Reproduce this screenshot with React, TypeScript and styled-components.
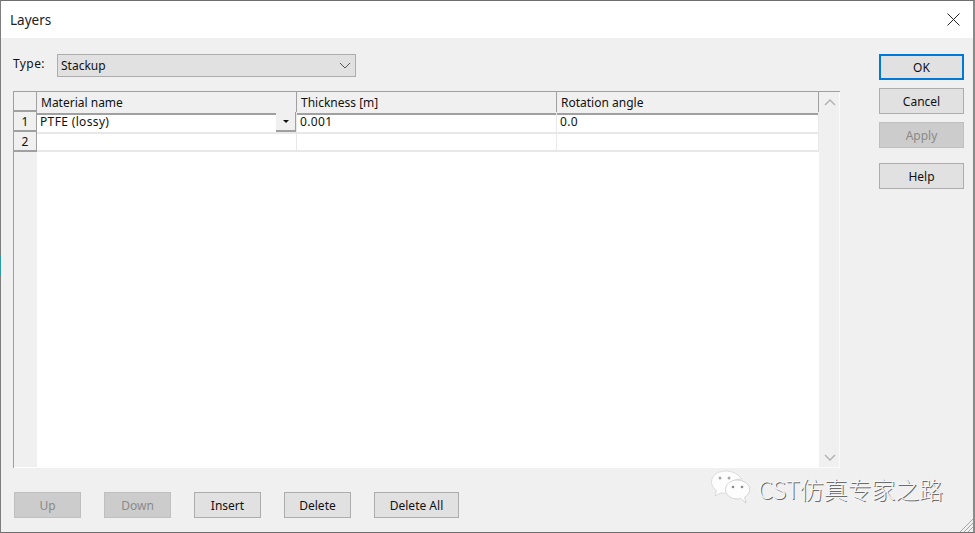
import React from "react";
import styled, { createGlobalStyle } from "styled-components";

const Global = createGlobalStyle`
  html, body { margin: 0; padding: 0; background: #f0f0f0; }
  * { box-sizing: border-box; }
  body { font-family: "Noto Sans", "Noto Sans CJK SC", sans-serif; font-size: 12px; color: #111; }
`;

const Win = styled.div`
  position: relative;
  width: 975px;
  height: 533px;
  display: flex;
  flex-direction: column;
  background: #f0f0f0;
  border-top: 1px solid #6f6f6f;
  border-left: 1px solid #7d7d7d;
  border-right: 2px solid #8a8a8a;
  border-bottom: 1px solid #6f6f6f;
  overflow: hidden;
`;

const BackdropSliver = styled.div`
  position: fixed;
  left: 0;
  top: 255px;
  width: 1px;
  height: 20px;
  background: #2a9aa5;
`;

const TitleBar = styled.div`
  height: 37px;
  flex: none;
  background: #fff;
  display: flex;
  align-items: center;
  justify-content: space-between;
  padding: 0 13px 0 9px;
  font-size: 13.5px;
  color: #222;
`;

const Body = styled.div`
  flex: 1;
  display: flex;
  min-height: 0;
  padding: 16px 9px 14px 12px;
`;

const Main = styled.div`
  width: 828px;
  display: flex;
  flex-direction: column;
`;

const TypeRow = styled.div`
  display: flex;
  align-items: center;
  height: 23px;
  gap: 12px;
`;

const TypeLabel = styled.span`
  width: 32px;
  margin-top: -4px;
  letter-spacing: 0.4px;
`;

const Combo = styled.div`
  width: 299px;
  height: 23px;
  background: #e1e1e1;
  border: 1px solid #adadad;
  display: flex;
  align-items: center;
  justify-content: space-between;
  padding: 0 2px 0 3px;
  svg { margin-right: 2px; }
`;

const Grid = styled.div`
  margin-top: 14px;
  height: 377px;
  display: grid;
  grid-template-columns: 23px 1fr 21px;
  background: #fff;
  border-top: 1px solid #a0a0a0;
  border-left: 1px solid #a0a0a0;
`;

const Gutter = styled.div`
  background: #f0f0f0;
  margin-bottom: 1px;
`;

const Table = styled.div`
  display: flex;
  flex-direction: column;
  background: #fff;
`;

const Row = styled.div`
  display: grid;
  grid-template-columns: 260px 260px 262px;
  height: 20px;
  flex: none;
`;

const HeadRow = styled(Row)`
  background: #f0f0f0;
`;

const Head = styled.div`
  padding: 0 0 0 4px;
  line-height: 21px;
  background: #f0f0f0;
  border-right: 1px solid #a0a0a0;
  border-bottom: 2px solid #a0a0a0;
  white-space: nowrap;
`;

const Corner = styled.div`
  height: 20px;
  border-right: 1px solid #a0a0a0;
  border-bottom: 2px solid #a0a0a0;
`;

const RowNum = styled.div`
  height: 20px;
  text-align: center;
  line-height: 19px;
  border-right: 1px solid #a0a0a0;
  border-bottom: 2px solid #a0a0a0;
  background: #f0f0f0;
`;

const Cell = styled.div`
  position: relative;
  padding-left: 3px;
  line-height: 20px;
  letter-spacing: 0.35px;
  border-right: 1px solid #e8e8e8;
  border-bottom: 2px solid #e8e8e8;
  white-space: nowrap;
`;

const DropBtn = styled.div`
  position: absolute;
  right: 0;
  top: 0;
  width: 20px;
  height: 20px;
  background: #f0f0f0;
  border-right: 1px solid #a0a0a0;
  border-bottom: 2px solid #a0a0a0;
  display: flex;
  align-items: center;
  justify-content: center;
`;

const Arrow = styled.span`
  width: 0;
  height: 0;
  border-left: 3px solid transparent;
  border-right: 3px solid transparent;
  border-top: 3px solid #111;
`;

const ScrollBar = styled.div`
  background: #f0f0f0;
  border-right: 1px solid #fafafa;
  border-bottom: 1px solid #fafafa;
  display: flex;
  flex-direction: column;
  justify-content: space-between;
  align-items: center;
  padding: 7px 0 6px 1px;
`;

const BottomBar = styled.div`
  margin-top: 24px;
  display: flex;
  gap: 23px;
  padding-left: 1px;
`;

const Btn = styled.button<{ $w?: number; $h?: number; $primary?: boolean }>`
  width: ${(p) => p.$w ?? 67}px;
  height: ${(p) => p.$h ?? 26}px;
  flex: none;
  font: inherit;
  padding: 0;
  color: #111;
  background: #e1e1e1;
  border: ${(p) => (p.$primary ? "2px solid #0078d7" : "1px solid #adadad")};
  &:disabled {
    background: #cccccc;
    border-color: #bfbfbf;
    color: #8a8a8a;
  }
`;

const Side = styled.div`
  margin-left: 39px;
  width: 85px;
  display: flex;
  flex-direction: column;
  gap: 8px;
`;

const HelpBtn = styled(Btn)`
  margin-top: 7px;
`;

const Watermark = styled.div`
  position: absolute;
  left: 709px;
  bottom: 26px;
  display: flex;
  align-items: center;
  gap: 7px;
`;

const WatermarkText = styled.span`
  font-family: "Noto Sans CJK SC", "Noto Sans", sans-serif;
  font-size: 24px;
  font-weight: 300;
  line-height: 30px;
  letter-spacing: -0.1px;
  color: #f6f6f6;
  text-shadow: 1px 1px 0 #6b6b6b;
  margin-top: 1px;
`;

const Grip = styled.svg`
  position: absolute;
  right: 0;
  bottom: 0;
`;

const WeChat = () => (
  <svg width="41" height="36" viewBox="0 0 41 36">
    <path d="M15 1C7.500 1 1.500 6 1.500 12c0 3.500 2 6.400 5 8.500L5 26l6-3.200c1.500.4 3 .6 4.500.6 1 0 2-.1 3-.3-.4-1.100-.6-2.300-.6-3.500 0-6 5.500-10.500 12.500-10.500h1C29.500 4.500 22.800 1 15 1z" fill="#fdfdfd" stroke="#d0d0d0" strokeWidth="0.7" />
    <path d="M27 10c-6.500 0-11.500 4.300-11.500 9.500S20.500 29 27 29c1.300 0 2.500-.2 3.700-.5L36 33l-1.300-5.800c3-1.800 5-4.600 5-7.700C39.700 14.300 33.500 10 27 10z" fill="#fdfdfd" stroke="#c4c4c4" strokeWidth="0.7" />
    <circle cx="10" cy="8" r="1.500" fill="#a8a8a8" />
    <circle cx="19" cy="8" r="1.500" fill="#a8a8a8" />
    <circle cx="23" cy="17" r="1.300" fill="#8a8a8a" />
    <circle cx="32" cy="17" r="1.300" fill="#8a8a8a" />
  </svg>
);

export default function App() {
  return (
    <>
      <Global />
      <Win>
        <TitleBar>
          <span>Layers</span>
          <svg width="13" height="13" viewBox="0 0 13 13">
            <path d="M.5.5l12 12M12.500.5l-12 12" stroke="#222" strokeWidth="1" fill="none" />
          </svg>
        </TitleBar>
        <Body>
          <Main>
            <TypeRow>
              <TypeLabel>Type:</TypeLabel>
              <Combo>
                <span>Stackup</span>
                <svg width="12" height="7" viewBox="0 0 12 7">
                  <path d="M1 1l5 5 5-5" stroke="#555" fill="none" />
                </svg>
              </Combo>
            </TypeRow>
            <Grid>
              <Gutter>
                <Corner />
                <RowNum>1</RowNum>
                <RowNum>2</RowNum>
              </Gutter>
              <Table>
                <HeadRow>
                  <Head>Material name</Head>
                  <Head>Thickness [m]</Head>
                  <Head>Rotation angle</Head>
                </HeadRow>
                <Row>
                  <Cell>
                    PTFE (lossy)
                    <DropBtn>
                      <Arrow />
                    </DropBtn>
                  </Cell>
                  <Cell>0.001</Cell>
                  <Cell>0.0</Cell>
                </Row>
                <Row>
                  <Cell />
                  <Cell />
                  <Cell />
                </Row>
              </Table>
              <ScrollBar>
                <svg width="12" height="7" viewBox="0 0 12 7">
                  <path d="M1 6l5-5 5 5" stroke="#b5b5b5" strokeWidth="1.500" fill="none" />
                </svg>
                <svg width="12" height="7" viewBox="0 0 12 7">
                  <path d="M1 1l5 5 5-5" stroke="#b5b5b5" strokeWidth="1.500" fill="none" />
                </svg>
              </ScrollBar>
            </Grid>
            <BottomBar>
              <Btn disabled>Up</Btn>
              <Btn disabled>Down</Btn>
              <Btn>Insert</Btn>
              <Btn>Delete</Btn>
              <Btn $w={85}>Delete All</Btn>
            </BottomBar>
          </Main>
          <Side>
            <Btn $w={85} $primary>OK</Btn>
            <Btn $w={85}>Cancel</Btn>
            <Btn $w={85} disabled>Apply</Btn>
            <HelpBtn $w={85}>Help</HelpBtn>
          </Side>
        </Body>
        <Watermark>
          <WeChat />
          <WatermarkText>CST仿真专家之路</WatermarkText>
        </Watermark>
        <Grip width="14" height="14" viewBox="0 0 14 14">
          <path d="M14 1L1 14M14 5L5 14M14 9L9 14" stroke="#a8a8a8" fill="none" />
        </Grip>
        <BackdropSliver />
      </Win>
    </>
  );
}
